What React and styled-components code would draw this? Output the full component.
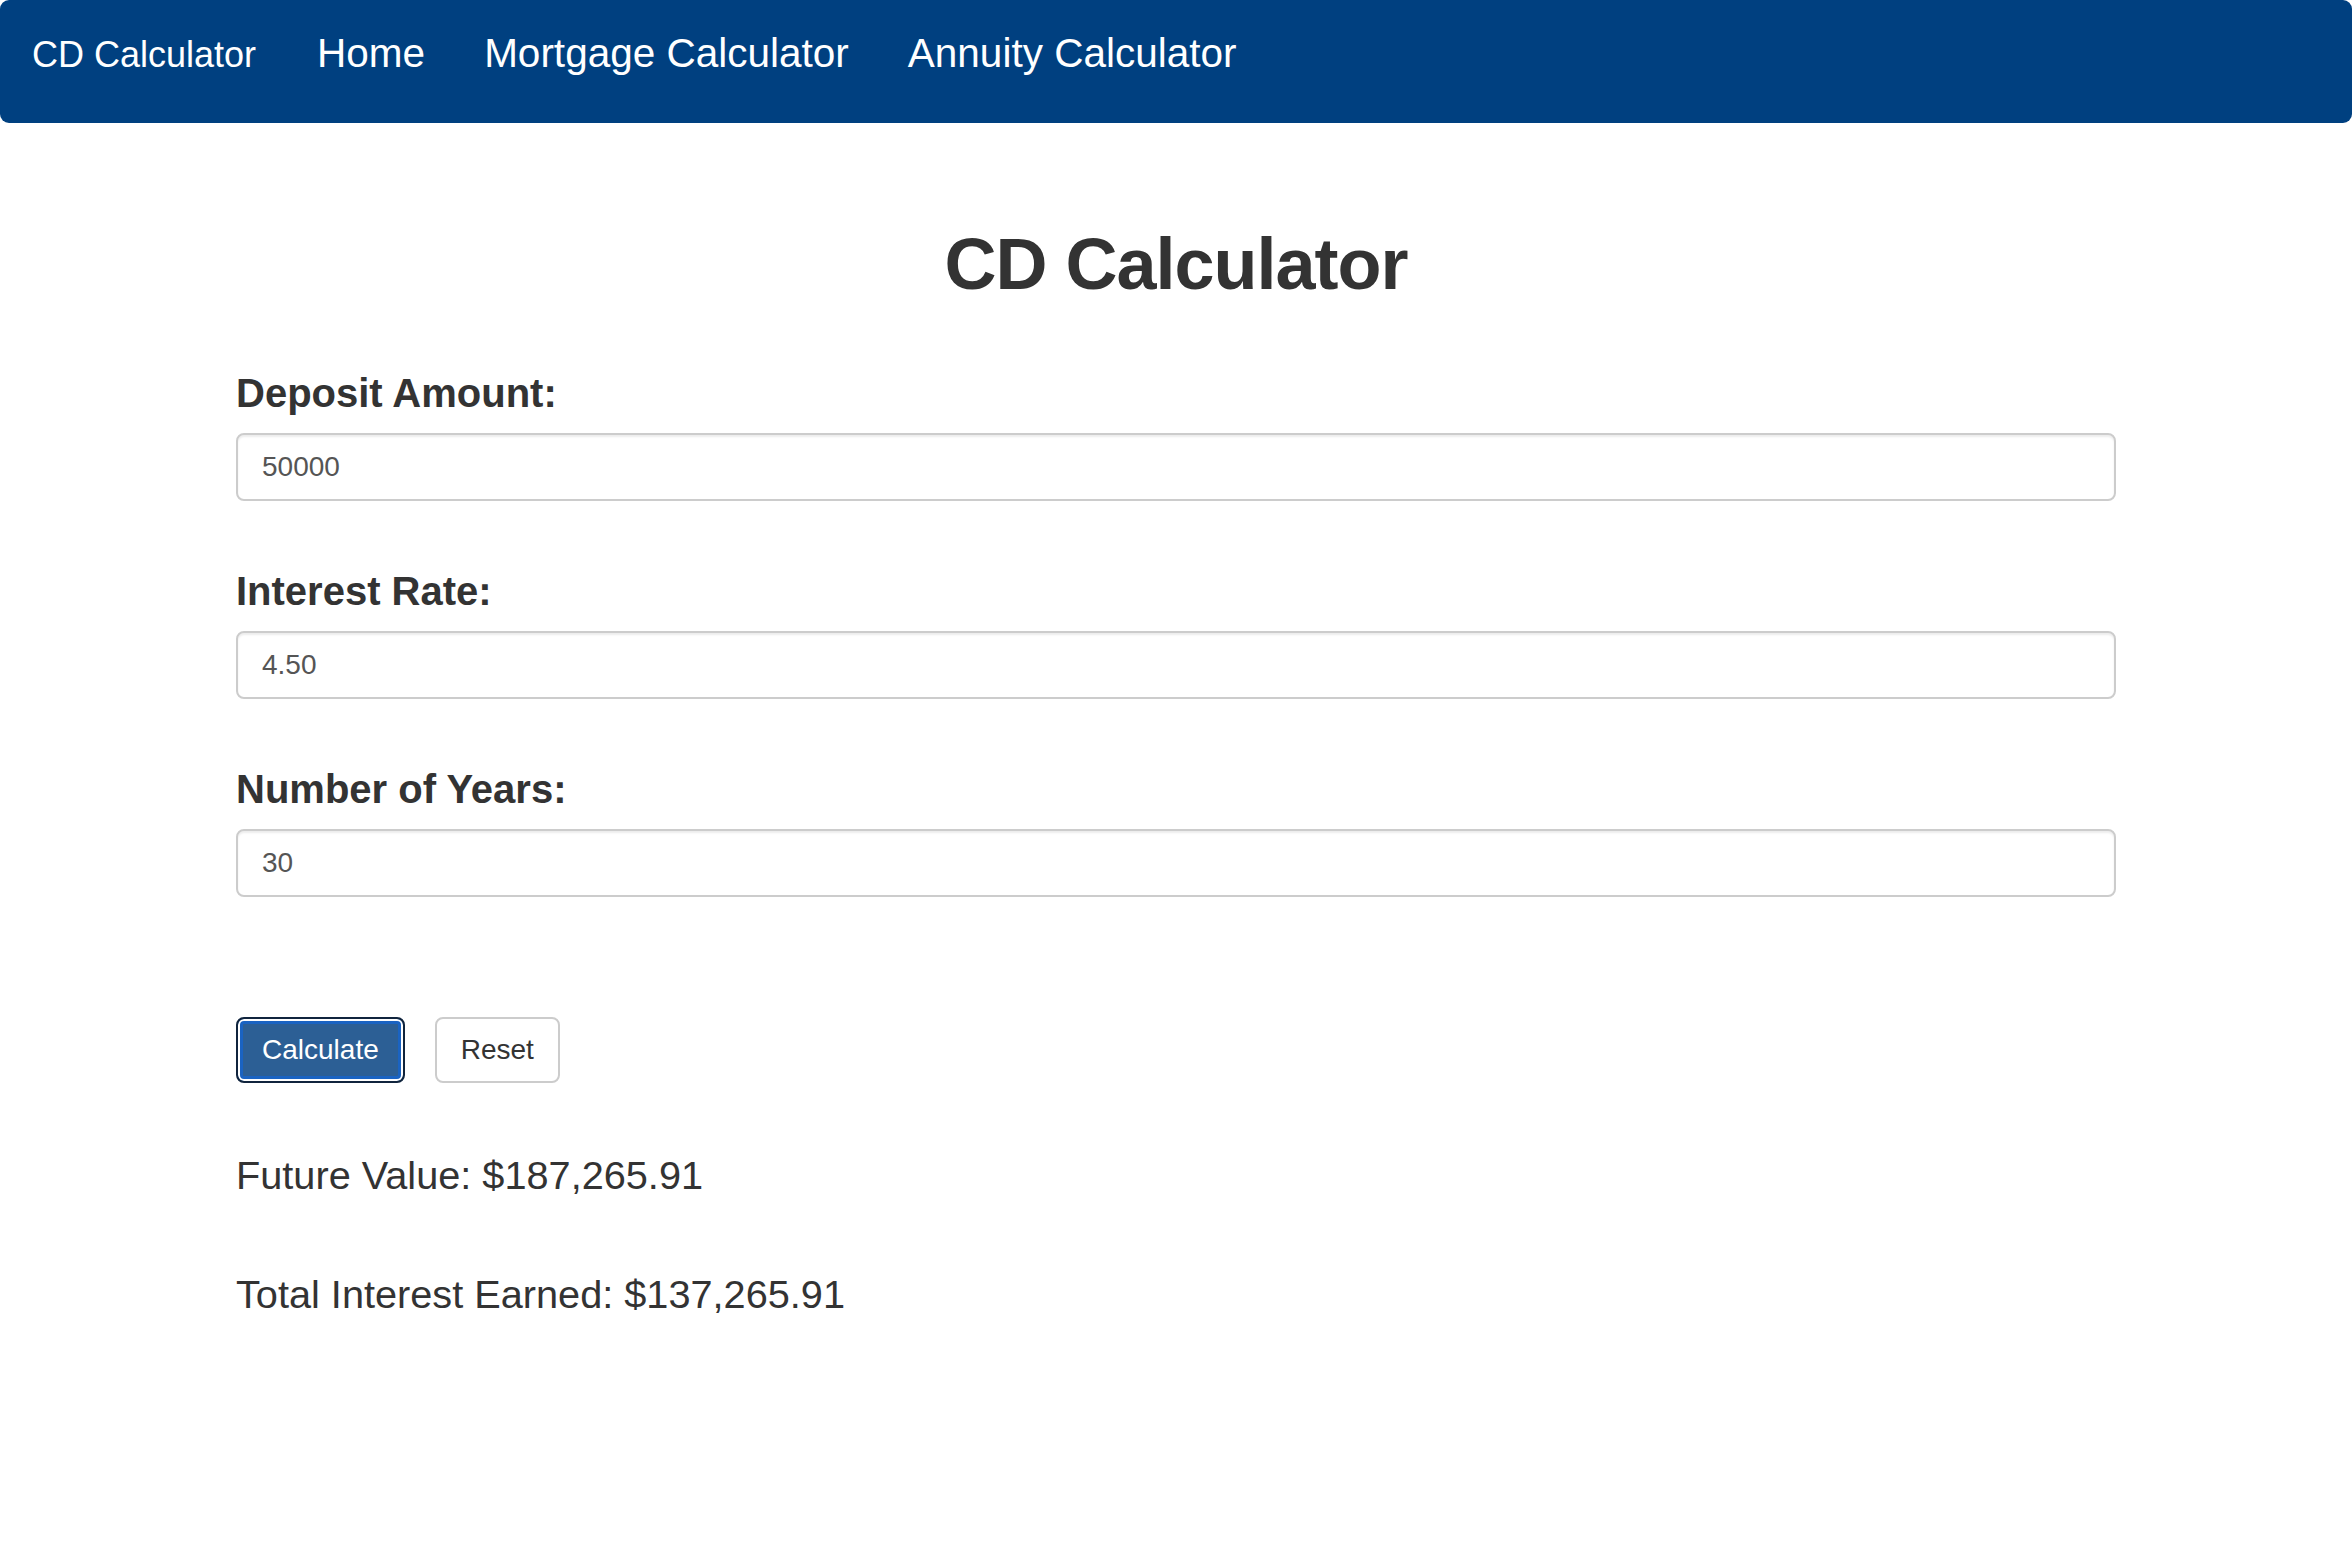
import React from "react";
import styled, { createGlobalStyle } from "styled-components";

const GlobalStyle = createGlobalStyle`
  body {
    margin: 0;
    background: #fff;
    color: #333;
    font-family: "Liberation Sans", Arial, Helvetica, sans-serif;
  }
  * {
    box-sizing: border-box;
  }
`;

const fields = [
  { label: "Deposit Amount:", value: "50000" },
  { label: "Interest Rate:", value: "4.50" },
  { label: "Number of Years:", value: "30" },
];

const App = () => {
  return (
    <>
      <GlobalStyle />
      <NavBar>
        <Brand href="#">CD Calculator</Brand>
        <NavLinks>
          <NavLink href="#">Home</NavLink>
          <NavLink href="#">Mortgage Calculator</NavLink>
          <NavLink href="#">Annuity Calculator</NavLink>
        </NavLinks>
      </NavBar>

      <Container>
        <Title>CD Calculator</Title>

        {fields.map((f) => (
          <FormGroup key={f.label}>
            <Label>{f.label}</Label>
            <Input type="text" defaultValue={f.value} />
          </FormGroup>
        ))}

        <Buttons>
          <PrimaryButton type="button">Calculate</PrimaryButton>
          <Button type="button">Reset</Button>
        </Buttons>

        <Result>Future Value: $187,265.91</Result>
        <Result>Total Interest Earned: $137,265.91</Result>
      </Container>
    </>
  );
};

const NavBar = styled.nav`
  height: 123px;
  background: #004080;
  border-radius: 9px;
  display: flex;
  align-items: baseline;
  padding: 30px 0 0 32px;
`;

const Brand = styled.a`
  font-size: 36px;
  color: #fff;
  text-decoration: none;
  margin-right: 61px;
`;

const NavLinks = styled.div`
  display: flex;
  align-items: baseline;
  gap: 59px;
`;

const NavLink = styled.a`
  font-size: 40.5px;
  color: #fff;
  text-decoration: none;
`;

const Container = styled.div`
  width: 1880px;
  margin: 0 auto;
  padding-bottom: 100px;
`;

const Title = styled.h1`
  margin: 102px 0 65px;
  font-size: 72px;
  line-height: 1.1;
  font-weight: 700;
  letter-spacing: -1px;
  text-align: center;
  color: #333;
`;

const FormGroup = styled.div`
  margin-bottom: 66px;
`;

const Label = styled.label`
  display: block;
  font-size: 40px;
  line-height: 1.2;
  font-weight: 700;
  margin: 2px 0 16px;
`;

const Input = styled.input`
  display: block;
  width: 100%;
  height: 68px;
  padding: 0 24px;
  font-family: inherit;
  font-size: 28px;
  color: #555;
  background: #fff;
  border: 2px solid #ccc;
  border-radius: 8px;
  box-shadow: inset 0 2px 2px rgba(0, 0, 0, 0.075);
  outline: none;
`;

const Buttons = styled.div`
  display: flex;
  gap: 30px;
  margin-top: 120px;
`;

const Button = styled.button`
  height: 66px;
  padding: 0 24px;
  font-family: inherit;
  font-size: 28px;
  color: #333;
  background: #fff;
  border: 2px solid #ccc;
  border-radius: 8px;
  cursor: pointer;
`;

const PrimaryButton = styled(Button)`
  color: #fff;
  background: #2c5f95;
  border: 2px solid #10243d;
  box-shadow: inset 0 0 0 2px #fff, inset 0 0 0 5px #1a63c2;
`;

const Result = styled.p`
  font-size: 39.7px;
  line-height: 1.4;
  margin: 65px 0 0;
  & + & {
    margin-top: 63px;
  }
`;

export default App;
